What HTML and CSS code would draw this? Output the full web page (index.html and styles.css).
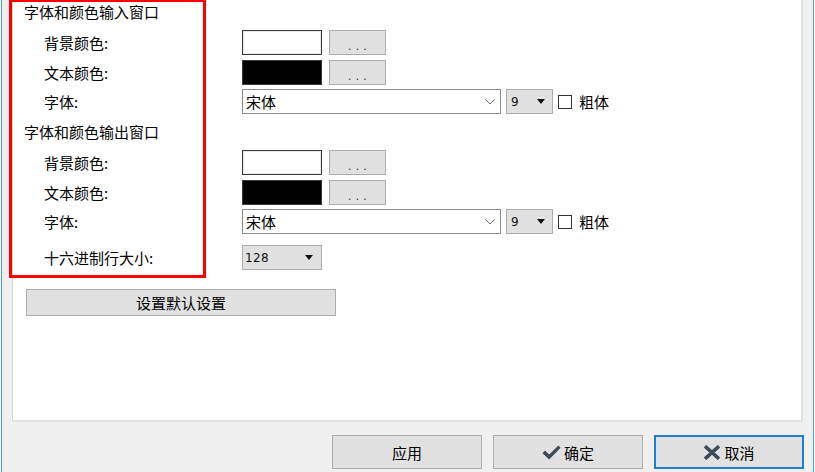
FILE: index.html
```html
<!DOCTYPE html>
<html lang="zh-CN">
<head>
<meta charset="utf-8">
<title>设置</title>
<link rel="stylesheet" href="styles.css">
</head>
<body>
<div class="window">
  <div class="panel">
    <div class="heading">字体和颜色输入窗口</div>
    <div class="row r1">
      <span class="label">背景颜色:</span>
      <span class="swatch swatch-white"></span>
      <span class="dots-btn">...</span>
    </div>
    <div class="row r2">
      <span class="label">文本颜色:</span>
      <span class="swatch swatch-black"></span>
      <span class="dots-btn">...</span>
    </div>
    <div class="row r3">
      <span class="label">字体:</span>
      <span class="font-combo"><span class="combo-text">宋体</span>
        <svg class="chev" width="10" height="6" viewBox="0 0 10 6"><path d="M0.5 0.5 L5 5 L9.5 0.5" fill="none" stroke="#6d6d6d" stroke-width="1"/></svg>
      </span>
      <span class="size-combo"><span class="num">9</span><span class="tri"></span></span>
      <span class="check"></span>
      <span class="check-label">粗体</span>
    </div>
    <div class="heading h2">字体和颜色输出窗口</div>
    <div class="row r1">
      <span class="label">背景颜色:</span>
      <span class="swatch swatch-white"></span>
      <span class="dots-btn">...</span>
    </div>
    <div class="row r2">
      <span class="label">文本颜色:</span>
      <span class="swatch swatch-black"></span>
      <span class="dots-btn">...</span>
    </div>
    <div class="row r6">
      <span class="label">字体:</span>
      <span class="font-combo"><span class="combo-text">宋体</span>
        <svg class="chev" width="10" height="6" viewBox="0 0 10 6"><path d="M0.5 0.5 L5 5 L9.5 0.5" fill="none" stroke="#6d6d6d" stroke-width="1"/></svg>
      </span>
      <span class="size-combo"><span class="num">9</span><span class="tri"></span></span>
      <span class="check"></span>
      <span class="check-label">粗体</span>
    </div>
    <div class="row r7">
      <span class="label">十六进制行大小:</span>
      <span class="line-combo"><span class="num">128</span><span class="tri"></span></span>
    </div>
    <div class="wide-btn">设置默认设置</div>
  </div>
  <div class="footer">
    <div class="btn">应用</div>
    <div class="btn"><svg class="ico" width="19" height="15" viewBox="0 0 19 15"><path d="M0.5 8.2 L3 5.6 L7.2 9.6 L16.4 0.4 L18.6 2.8 L7.2 14.4 Z" fill="#3f4a59"/></svg>确定</div>
    <div class="btn btn-default"><svg class="ico" width="18" height="15" viewBox="0 0 18 15"><path d="M2 1.2 L16 13.8 M16 1.2 L2 13.8" stroke="#3f4a59" stroke-width="3.6" fill="none"/></svg>取消</div>
  </div>
  <div class="annotation"></div>
</div>
</body>
</html>
```
FILE: styles.css
```css
* { box-sizing: border-box; }

html, body {
  margin: 0;
  padding: 0;
  background: #ffffff;
  overflow: hidden;
}

body {
  font-family: "Noto Sans CJK SC", "Noto Sans", sans-serif;
  font-size: 15px;
  color: #000;
}

.window {
  position: relative;
  margin-left: 1px;
  width: 813px;
  height: 472px;
  background: #f0f0f0;
  border-left: 1px solid #4e99d8;
  border-right: 1px solid #4e99d8;
  padding: 0 9px 0 10px;
  display: flex;
  flex-direction: column;
}

.panel {
  height: 422px;
  margin-right: 1px;
  background: #ffffff;
  border-left: 1px solid #d6d6d6;
  border-right: 2px solid #e2e2e2;
  border-bottom: 2px solid #e2e2e2;
  padding-left: 11px;
  display: flex;
  flex-direction: column;
}

.heading {
  height: 24px;
  line-height: 24px;
  margin-bottom: 6px;
}

.heading.h2 { margin-top: 6px; }

.row {
  height: 25px;
  display: flex;
  align-items: center;
}

.row.r1 { margin-bottom: 5px; }
.row.r2 { margin-bottom: 4px; }
.row.r6 { margin-bottom: 11px; }

.label {
  width: 218px;
  padding-left: 20px;
  line-height: 25px;
  flex-shrink: 0;
}

.swatch {
  width: 80px;
  height: 25px;
  border: 1px solid #3a3a3a;
}

.swatch-white { background: #ffffff; box-shadow: inset 0 0 0 1px #e8e8e8; }
.swatch-black { background: #000000; }

.dots-btn {
  margin-left: 7px;
  width: 57px;
  height: 25px;
  background: #e1e1e1;
  border: 1px solid #adadad;
  font-family: "Liberation Sans", sans-serif;
  font-size: 12px;
  letter-spacing: 4.3px;
  text-indent: 4px;
  color: #333;
  display: flex;
  align-items: center;
  justify-content: center;
  padding-top: 6px;
}

.font-combo {
  width: 259px;
  height: 25px;
  background: #fff;
  border: 1px solid #8c8c8c;
  display: flex;
  align-items: center;
  justify-content: space-between;
  padding: 0 5px 0 3px;
}

.combo-text { line-height: 23px; }

.chev { display: block; margin-top: 1px; }

.size-combo {
  margin-left: 5px;
  width: 47px;
  height: 25px;
  background: #e1e1e1;
  border: 1px solid #adadad;
  display: flex;
  align-items: center;
  justify-content: space-between;
  padding: 0 7px 0 4px;
}

.line-combo {
  width: 80px;
  height: 25px;
  background: #e1e1e1;
  border: 1px solid #adadad;
  display: flex;
  align-items: center;
  justify-content: space-between;
  padding: 0 8px 0 2px;
}

.num {
  font-family: "DejaVu Sans", sans-serif;
  font-size: 12px;
  letter-spacing: 0.4px;
  color: #111;
}

.tri {
  width: 0;
  height: 0;
  border-left: 4px solid transparent;
  border-right: 4px solid transparent;
  border-top: 5px solid #111;
}

.check {
  margin-left: 5px;
  width: 14px;
  height: 14px;
  border: 1px solid #333;
  background: #fff;
}

.check-label { margin-left: 7px; }

.wide-btn {
  margin-top: 19px;
  margin-left: 2px;
  width: 310px;
  height: 27px;
  background: #e1e1e1;
  border: 1px solid #adadad;
  display: flex;
  align-items: center;
  justify-content: center;
}

.footer {
  margin-top: 13px;
  display: flex;
  justify-content: flex-end;
  gap: 11px;
}

.btn {
  width: 150px;
  height: 34px;
  background: #e1e1e1;
  border: 1px solid #adadad;
  display: flex;
  align-items: center;
  justify-content: center;
  gap: 3px;
}

.btn-default { border: 2px solid #1e7fd6; }

.ico { display: block; }

.annotation {
  position: absolute;
  left: 7px;
  top: -1px;
  width: 197px;
  height: 279px;
  border: 3px solid #ff0000;
  pointer-events: none;
}
```
